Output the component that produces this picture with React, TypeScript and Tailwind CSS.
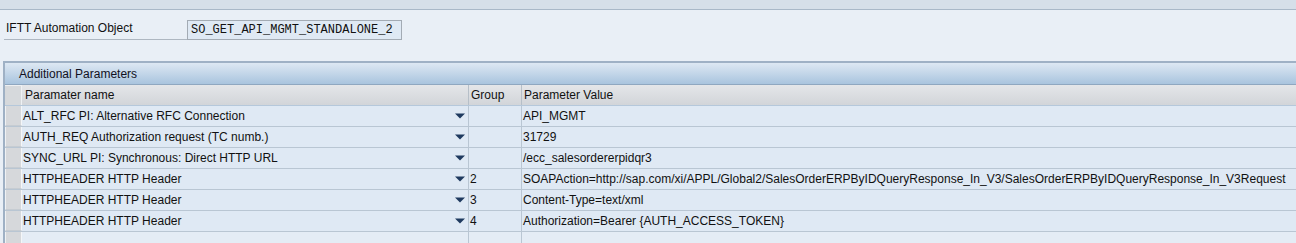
const rows = [
  { name: 'ALT_RFC PI: Alternative RFC Connection', group: '', value: 'API_MGMT' },
  { name: 'AUTH_REQ Authorization request (TC numb.)', group: '', value: '31729' },
  { name: 'SYNC_URL PI: Synchronous: Direct HTTP URL', group: '', value: '/ecc_salesordererpidqr3' },
  {
    name: 'HTTPHEADER HTTP Header',
    group: '2',
    value:
      'SOAPAction=http://sap.com/xi/APPL/Global2/SalesOrderERPByIDQueryResponse_In_V3/SalesOrderERPByIDQueryResponse_In_V3Request',
  },
  { name: 'HTTPHEADER HTTP Header', group: '3', value: 'Content-Type=text/xml' },
  { name: 'HTTPHEADER HTTP Header', group: '4', value: 'Authorization=Bearer {AUTH_ACCESS_TOKEN}' },
];

const cols = 'grid grid-cols-[17px_447px_53px_1fr]';

function Arrow() {
  return (
    <svg width="10" height="6" viewBox="0 0 10 6" className="shrink-0">
      <path d="M0 0.5h10L5 5.5z" fill="#1f3a5f" />
    </svg>
  );
}

function Selector() {
  return <div className="border-r border-b border-l border-r-[#f4f6f8] border-b-[#c6ccd2] border-l-[#f0f2f4] bg-[#d6d8db]" />;
}

export default function App() {
  return (
    <div className="h-[243px] w-[1296px] overflow-hidden bg-[#e9eff6] font-['Liberation_Sans',Arial,sans-serif] text-[12px] text-[#111]">
      {/* title strip */}
      <div className="h-[10px] border-b border-[#a9b8c8] bg-[#d6dfe9]" />

      {/* object field */}
      <div className="flex items-end px-[4px] pt-[10px]">
        <div className="w-[183px] border-b border-[#aeb7c1] pb-[3px] pl-[2px] leading-[15px]">
          IFTT Automation Object
        </div>
        <div className="flex h-[20px] w-[215px] items-center border border-[#a3abb4] bg-[#dfe9f4] pl-[3px] font-['Liberation_Mono',monospace] text-[12px] text-[#111]">
          SO_GET_API_MGMT_STANDALONE_2
        </div>
      </div>

      {/* parameters table */}
      <div className="mt-[21px] ml-[3px] border-t-2 border-l-2 border-[#9fb1c5]">
        <div className="flex h-[22px] items-center border-b border-[#8fa7c0] bg-gradient-to-b from-[#dde8f3] to-[#a9c4de] pl-[14px] text-[#112]">
          Additional Parameters
        </div>
        <div className={`${cols} h-[21px] border-b border-[#b5c8db]`}>
          <div className="border-t border-r border-t-[#eef0f2] border-r-[#eef1f4] bg-[#d6d9dc]" />
          <div className="flex items-center border-r border-[#b6bfc8] bg-gradient-to-b from-[#e4e6e9] to-[#d2d5d9] pl-[3px]">
            Paramater name
          </div>
          <div className="flex items-center border-r border-[#b6bfc8] bg-gradient-to-b from-[#e4e6e9] to-[#d2d5d9] pl-[2px]">
            Group
          </div>
          <div className="flex items-center bg-gradient-to-b from-[#e4e6e9] to-[#d2d5d9] pl-[2px]">
            Parameter Value
          </div>
        </div>
        {rows.map((r, i) => (
          <div key={i} className={`${cols} h-[21px] border-b border-[#b9c6d3] bg-[#dfe9f4]`}>
            <Selector />
            <div className="flex items-center justify-between border-r border-[#b9c6d3] pr-[3px] pl-[1px]">
              <span className="whitespace-nowrap">{r.name}</span>
              <Arrow />
            </div>
            <div className="flex items-center border-r border-[#b9c6d3] pl-[1px]">{r.group}</div>
            <div className="flex items-center whitespace-nowrap pl-[1px]">{r.value}</div>
          </div>
        ))}
        <div className={`${cols} h-[21px] bg-[#e4ecf5]`}>
          <Selector />
          <div className="border-r border-[#b9c6d3]" />
          <div className="border-r border-[#b9c6d3]" />
          <div />
        </div>
      </div>
    </div>
  );
}
